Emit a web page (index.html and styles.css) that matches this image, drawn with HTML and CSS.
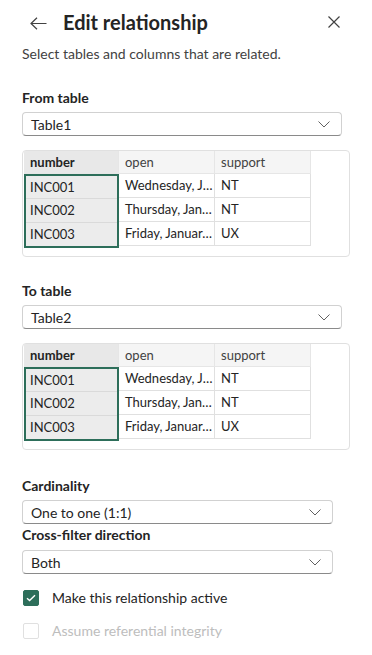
FILE: index.html
```html
<!DOCTYPE html>
<html>
  <head>
    <title>Edit relationship</title>
    <meta charset="UTF-8">
    <link rel="stylesheet" href="styles.css">
  </head>
  <body>
    <div class="panel">
      <div class="header">
        <svg class="back" width="17" height="13" viewBox="0 0 17 13"><path d="M16.5 6.5H1M7 0.7L1 6.5L7 12.3" fill="none" stroke="#424242" stroke-width="1.2"/></svg>
        <h1 class="title">Edit relationship</h1>
        <svg class="close" width="12" height="12" viewBox="0 0 12 12"><path d="M0.5 0.5L11.5 11.5M11.5 0.5L0.5 11.5" fill="none" stroke="#424242" stroke-width="1.2"/></svg>
      </div>
      <p class="intro">Select tables and columns that are related.</p>

      <div class="section">
        <div class="label">From table</div>
        <div class="select">
          <span>Table1</span>
          <svg class="chevron" width="12" height="7" viewBox="0 0 12 7"><path d="M0.5 0.5L6 6L11.5 0.5" fill="none" stroke="#616161" stroke-width="1"/></svg>
        </div>
        <div class="preview">
          <div class="grid">
            <div class="col key">
              <div class="th">number</div>
              <div class="body">
                <div class="td">INC001</div>
                <div class="td">INC002</div>
                <div class="td">INC003</div>
              </div>
            </div>
            <div class="col">
              <div class="th">open</div>
              <div class="body">
                <div class="td">Wednesday, J…</div>
                <div class="td">Thursday, Jan…</div>
                <div class="td">Friday, Januar…</div>
              </div>
            </div>
            <div class="col">
              <div class="th">support</div>
              <div class="body">
                <div class="td">NT</div>
                <div class="td">NT</div>
                <div class="td">UX</div>
              </div>
            </div>
          </div>
        </div>
      </div>

      <div class="section">
        <div class="label">To table</div>
        <div class="select">
          <span>Table2</span>
          <svg class="chevron" width="12" height="7" viewBox="0 0 12 7"><path d="M0.5 0.5L6 6L11.5 0.5" fill="none" stroke="#616161" stroke-width="1"/></svg>
        </div>
        <div class="preview">
          <div class="grid">
            <div class="col key">
              <div class="th">number</div>
              <div class="body">
                <div class="td">INC001</div>
                <div class="td">INC002</div>
                <div class="td">INC003</div>
              </div>
            </div>
            <div class="col">
              <div class="th">open</div>
              <div class="body">
                <div class="td">Wednesday, J…</div>
                <div class="td">Thursday, Jan…</div>
                <div class="td">Friday, Januar…</div>
              </div>
            </div>
            <div class="col">
              <div class="th">support</div>
              <div class="body">
                <div class="td">NT</div>
                <div class="td">NT</div>
                <div class="td">UX</div>
              </div>
            </div>
          </div>
        </div>
      </div>

      <div class="section options">
        <div class="label">Cardinality</div>
        <div class="select narrow">
          <span>One to one (1:1)</span>
          <svg class="chevron" width="12" height="7" viewBox="0 0 12 7"><path d="M0.5 0.5L6 6L11.5 0.5" fill="none" stroke="#616161" stroke-width="1"/></svg>
        </div>
        <div class="label second">Cross-filter direction</div>
        <div class="select narrow">
          <span>Both</span>
          <svg class="chevron" width="12" height="7" viewBox="0 0 12 7"><path d="M0.5 0.5L6 6L11.5 0.5" fill="none" stroke="#616161" stroke-width="1"/></svg>
        </div>
      </div>

      <div class="checks">
        <label class="check">
          <span class="box on">
            <svg width="10" height="8" viewBox="0 0 10 8"><path d="M1 4.2L3.6 6.6L9 1.2" fill="none" stroke="#fff" stroke-width="1.4"/></svg>
          </span>
          <span>Make this relationship active</span>
        </label>
        <label class="check disabled">
          <span class="box"></span>
          <span>Assume referential integrity</span>
        </label>
      </div>
    </div>
  </body>
</html>
```

FILE: styles.css
```css
body {
    margin: 0;
    background: #fff;
    color: #242424;
    font-family: "Segoe UI", Lato, "Noto Sans", sans-serif;
    font-size: 14px;
}

.panel {
    padding: 0 22px;
}

.header {
    display: flex;
    align-items: center;
    height: 44px;
    padding-left: 8px;
}

.back {
    margin-top: 3px;
}

.title {
    flex: 1;
    margin: 0 0 0 16px;
    font-size: 20px;
    font-weight: 700;
    line-height: 28px;
}

.close {
    margin-right: 10px;
}

.intro {
    margin: 0;
    line-height: 20px;
    color: #424242;
}

.section {
    margin-top: 24px;
}

.section.options {
    margin-top: 26px;
}

.label {
    font-weight: 700;
    line-height: 20px;
}

.select {
    display: flex;
    align-items: center;
    justify-content: space-between;
    box-sizing: border-box;
    width: 320px;
    height: 24px;
    margin-top: 4px;
    padding: 0 11px 0 8px;
    border: 1px solid #d1d1d1;
    border-bottom-color: #8a8a8a;
    border-radius: 4px;
    font-size: 14px;
}

.select.narrow {
    width: 311px;
}

.options .select + .label {
    margin-top: 1px;
}

.options .label.second + .select {
    margin-top: 5px;
}

.preview {
    box-sizing: border-box;
    width: 328px;
    height: 107px;
    margin-top: 14px;
    padding: 0 1px;
    border: 1px solid #e0e0e0;
    border-radius: 4px;
}

.grid {
    display: flex;
    font-size: 13px;
}

.col {
    width: 96px;
}

.col.key {
    width: 95px;
}

.th {
    box-sizing: border-box;
    height: 23px;
    padding-left: 6px;
    line-height: 22px;
    background: #f5f5f5;
    border-right: 1px solid #e6e6e6;
    border-bottom: 1px solid #e6e6e6;
    color: #424242;
}

.key .th {
    background: #e8e8e8;
    font-weight: 700;
    color: #242424;
}

.td {
    box-sizing: border-box;
    height: 24px;
    padding-left: 6px;
    line-height: 23px;
    border-right: 1px solid #e0e0e0;
    border-bottom: 1px solid #e0e0e0;
    white-space: nowrap;
    overflow: hidden;
}

.key .body {
    border: 2px solid #2d6e5a;
    background: #ececec;
}

.key .td {
    height: 23.33px;
    padding-left: 4px;
    border-right: none;
    border-color: #dadada;
}

.key .td:last-child {
    border-bottom: none;
}

.checks {
    margin-top: 16px;
}

.check {
    display: flex;
    align-items: center;
    gap: 13px;
    height: 16px;
    margin-left: 1px;
    line-height: 20px;
}

.check + .check {
    margin-top: 17px;
}

.box {
    display: flex;
    align-items: center;
    justify-content: center;
    box-sizing: border-box;
    width: 16px;
    height: 16px;
    border: 1px solid #d1d1d1;
    border-radius: 2px;
}

.box.on {
    background: #2d6e5a;
    border-color: #2d6e5a;
}

.check.disabled {
    color: #bdbdbd;
}

.check.disabled .box {
    border-color: #e0e0e0;
}
```
